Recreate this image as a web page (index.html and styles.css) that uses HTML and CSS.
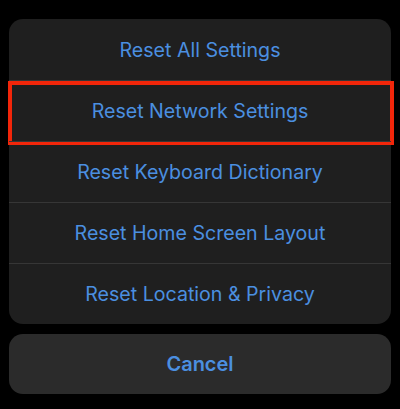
FILE: index.html
```html
<!DOCTYPE html>
<html>
<head>
<meta charset="utf-8">
<link rel="stylesheet" href="styles.css">
</head>
<body>
<div class="sheet">
  <div class="group">
    <div class="row">Reset All Settings</div>
    <div class="row highlighted">Reset Network Settings<span class="mark"></span></div>
    <div class="row">Reset Keyboard Dictionary</div>
    <div class="row">Reset Home Screen Layout</div>
    <div class="row">Reset Location &amp; Privacy</div>
  </div>
  <div class="cancel">Cancel</div>
</div>
</body>
</html>
```
FILE: styles.css
```css
html, body {
  margin: 0;
  padding: 0;
  background: #000;
  width: 400px;
  height: 409px;
  overflow: hidden;
}
.sheet {
  padding: 19px 9px 0 9px;
  display: flex;
  flex-direction: column;
  gap: 10px;
  font-family: Inter, "Noto Sans", sans-serif;
}
.group {
  background: #1f1f1f;
  border-radius: 14px;
  display: flex;
  flex-direction: column;
}
.row {
  height: 61px;
  display: flex;
  align-items: center;
  justify-content: center;
  color: #4b8fe0;
  font-size: 19.6px;
  border-top: 1px solid #363636;
  box-sizing: border-box;
  position: relative;
}
.row:first-child {
  border-top: none;
}
.mark {
  position: absolute;
  left: -1px;
  right: -3px;
  top: 0;
  bottom: -4px;
  border: 4px solid #f2260a;
}
.cancel {
  height: 60px;
  background: #2b2b2b;
  border-radius: 14px;
  display: flex;
  align-items: center;
  justify-content: center;
  color: #4b8fe0;
  font-size: 20px;
  font-weight: 600;
}
```
